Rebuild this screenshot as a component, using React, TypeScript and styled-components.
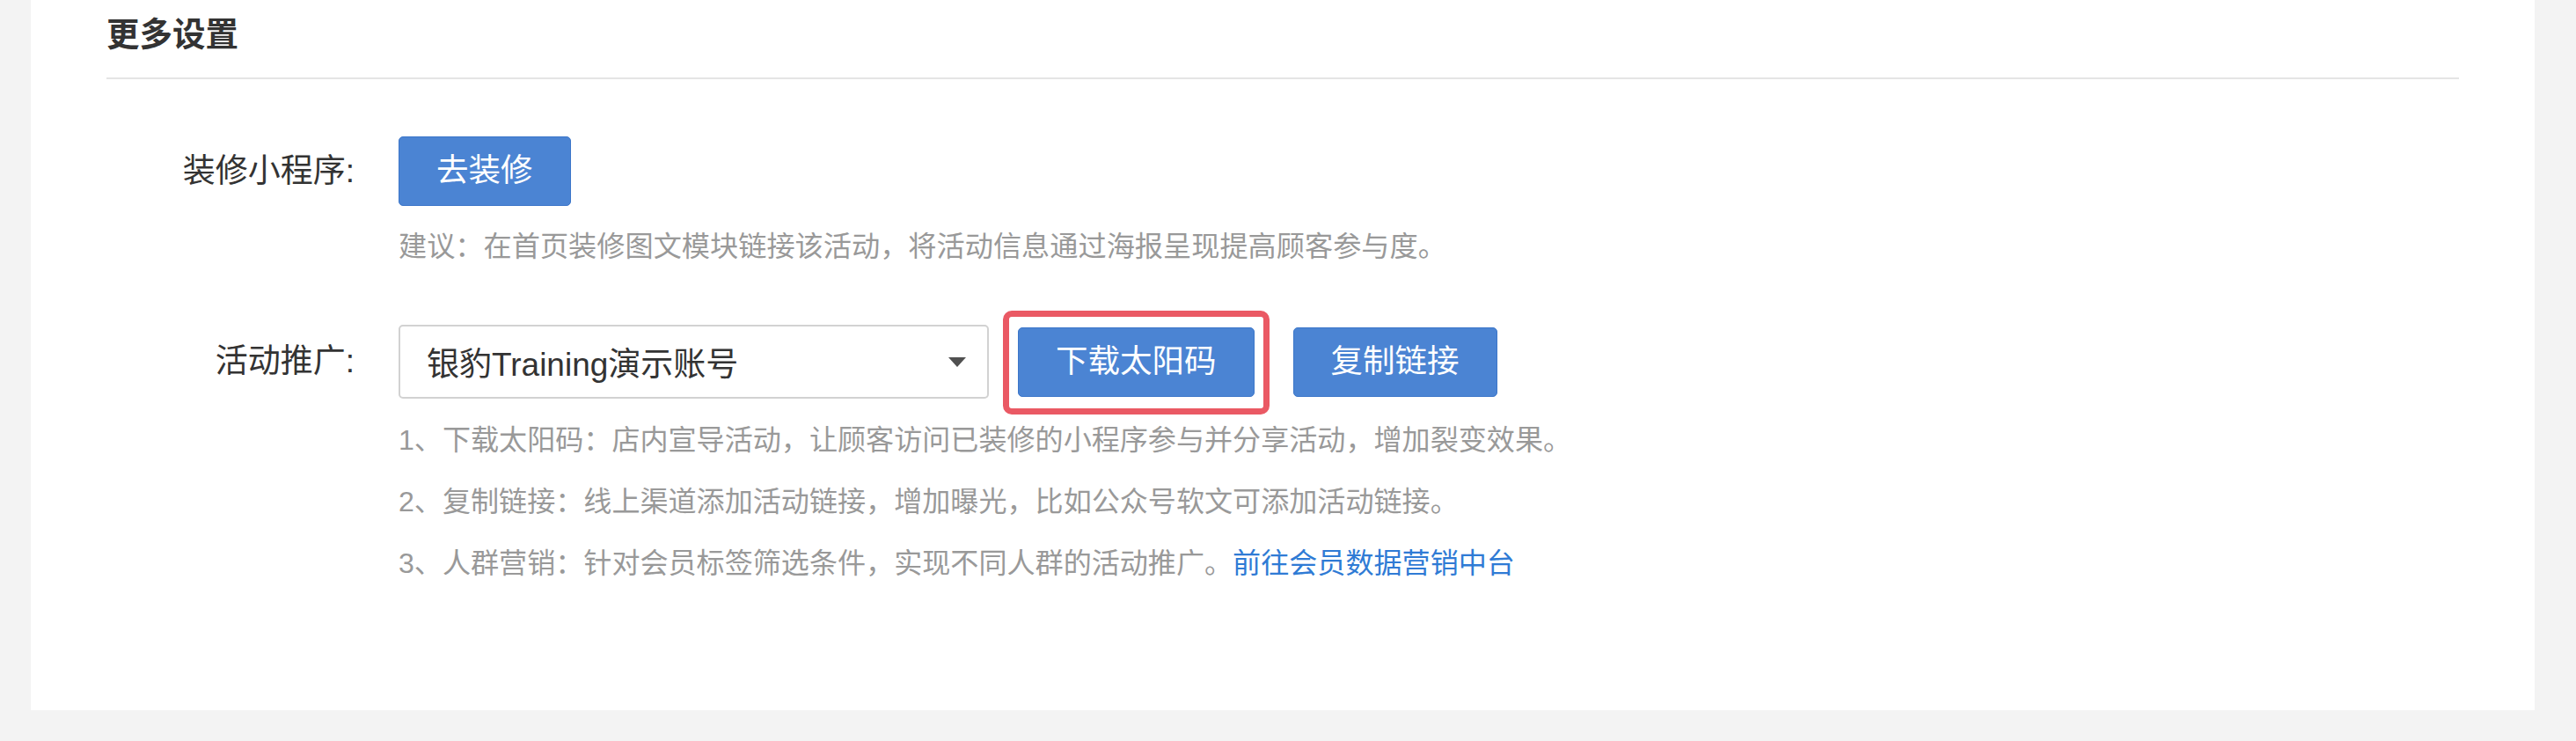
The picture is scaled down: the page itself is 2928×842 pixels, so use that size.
import styled, { createGlobalStyle } from "styled-components";

const GlobalStyle = createGlobalStyle`
  body {
    margin: 0;
    background: #f3f3f3;
    font-family: "Liberation Sans", "Noto Sans CJK SC", sans-serif;
  }
`;

const notes = [
  "1、下载太阳码：店内宣导活动，让顾客访问已装修的小程序参与并分享活动，增加裂变效果。",
  "2、复制链接：线上渠道添加活动链接，增加曝光，比如公众号软文可添加活动链接。",
];

const App = () => {
  return (
    <>
      <GlobalStyle />
      <Page>
        <Card>
          <SectionTitle>更多设置</SectionTitle>
          <Form>
            <Field>
              <Label>装修小程序:</Label>
              <Controls>
                <Button>去装修</Button>
              </Controls>
              <Hint>建议：在首页装修图文模块链接该活动，将活动信息通过海报呈现提高顾客参与度。</Hint>
            </Field>
            <Field $gap={67}>
              <Label>活动推广:</Label>
              <Controls>
                <Select>
                  <span>银豹Training演示账号</span>
                  <svg width="20" height="11" viewBox="0 0 20 11">
                    <polygon points="0,0 20,0 10,11" fill="#505050" />
                  </svg>
                </Select>
                <Highlight>
                  <Button>下载太阳码</Button>
                </Highlight>
                <Button>复制链接</Button>
              </Controls>
              <Notes>
                {notes.map((n) => (
                  <Note key={n}>{n}</Note>
                ))}
                <Note>
                  3、人群营销：针对会员标签筛选条件，实现不同人群的活动推广。
                  <Link href="#">前往会员数据营销中台</Link>
                </Note>
              </Notes>
            </Field>
          </Form>
        </Card>
      </Page>
    </>
  );
};

export default App;

const Page = styled.div`
  padding: 0 47px 0 35px;
`;

const Card = styled.div`
  height: 807px;
  box-sizing: border-box;
  background: #fff;
  padding: 0 86px;
`;

const SectionTitle = styled.h2`
  margin: 0;
  height: 90px;
  box-sizing: border-box;
  padding-top: 20px;
  border-bottom: 2px solid #e5e5e5;
  font-size: 37.5px;
  line-height: 38px;
  font-weight: bold;
  color: #333;
`;

const Form = styled.div`
  padding-top: 65px;
`;

const Field = styled.div<{ $gap?: number }>`
  display: grid;
  grid-template-columns: 282px 1fr;
  column-gap: 50px;
  align-items: center;
  margin-top: ${(p) => p.$gap ?? 0}px;
`;

const Label = styled.div`
  text-align: right;
  font-size: 37px;
  line-height: 44px;
  color: #333;
`;

const Controls = styled.div`
  display: flex;
  align-items: center;
`;

const Button = styled.button`
  height: 79px;
  padding: 0 42px;
  border: 1px solid #3c76c9;
  border-radius: 5px;
  background: #4b84d3;
  color: #fff;
  font-family: inherit;
  font-size: 36.5px;
  line-height: 1;
  cursor: pointer;
`;

const Select = styled.div`
  width: 671px;
  height: 84px;
  box-sizing: border-box;
  display: flex;
  align-items: center;
  justify-content: space-between;
  padding: 0 24px 0 30px;
  border: 2px solid #d2d2d2;
  border-radius: 5px;
  font-size: 37px;
  color: #333;
`;

const Highlight = styled.div`
  position: relative;
  display: flex;
  margin: 0 44px 0 33px;

  &::after {
    content: "";
    position: absolute;
    inset: -19px -17px -20px -17px;
    border: 7px solid #ea5964;
    border-radius: 10px;
    pointer-events: none;
  }
`;

const Hint = styled.div`
  grid-column: 2;
  margin-top: 24px;
  font-size: 32.2px;
  line-height: 44px;
  color: #999;
`;

const Notes = styled.div`
  grid-column: 2;
  margin-top: 12px;
`;

const Note = styled.div`
  font-size: 32.1px;
  line-height: 70px;
  color: #999;
`;

const Link = styled.a`
  color: #2f7bd5;
  text-decoration: none;
`;
